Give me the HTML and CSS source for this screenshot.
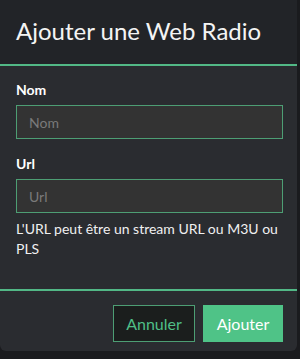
FILE: index.html
```html
<!DOCTYPE html>
<html>
	<head>
		<meta charset="utf-8" />
		<title>Ajouter une Web Radio</title>
		<link rel="stylesheet" href="styles.css">
	</head>
	<body>
		<div class="modal">
			<div class="modal-head">
				<h2>Ajouter une Web Radio</h2>
			</div>
			<div class="modal-body">
				<label class="lbl">Nom</label>
				<input class="field" type="text" placeholder="Nom">
				<label class="lbl lbl-url">Url</label>
				<input class="field" type="text" placeholder="Url">
				<p class="help">L'URL peut être un stream URL ou M3U ou PLS</p>
			</div>
			<div class="modal-foot">
				<button class="btn btn-cancel">Annuler</button>
				<button class="btn btn-ok">Ajouter</button>
			</div>
		</div>
	</body>
</html>
```

FILE: styles.css
```css
*{
	margin: 0;
	padding: 0;
	box-sizing: border-box;
}
body{
	background: #1a1b1e;
	font-family: Lato, "Open Sans", sans-serif;
	color: #fff;
}
.modal{
	width: 297px;
	height: 355px;
	margin-top: -4px;
	background: #2a2c30;
	border-radius: 0 0 6px 6px;
	overflow: hidden;
	display: flex;
	flex-direction: column;
}
.modal-head{
	height: 70px;
	padding: 21px 16px 0;
	background: #222428;
	border-bottom: 2px solid #52b886;
}
.modal-head h2{
	font-weight: 400;
	font-size: 24px;
	line-height: 28px;
	color: #f4f4f4;
}
.modal-body{
	padding: 15px 16px 0;
	height: 223px;
	display: flex;
	flex-direction: column;
}
.lbl{
	font-weight: 700;
	font-size: 14px;
	line-height: 17px;
	margin-bottom: 7px;
}
.lbl-url{
	margin-top: 16px;
}
.field{
	width: 267px;
	height: 34px;
	background: #333333;
	border: 1px solid #4d9e74;
	padding: 0 12px;
	font-family: inherit;
	font-size: 14px;
	color: #ddd;
	outline: none;
}
.field::placeholder{
	color: #7a7a7a;
}
.help{
	margin-top: 6px;
	font-size: 14px;
	line-height: 20px;
	color: #f0f0f0;
}
.modal-foot{
	border-top: 2px solid #52b886;
	padding: 14px 14px 0 0;
	display: flex;
	justify-content: flex-end;
	gap: 8px;
	flex: 1;
}
.btn{
	height: 37px;
	font-family: inherit;
	font-size: 16px;
	padding: 0 10px;
	border: 1px solid #4d9e74;
}
.btn-cancel{
	width: 82px;
	background: #1b1e1d;
	color: #4fbf87;
}
.btn-ok{
	width: 80px;
	background: #4fc387;
	border-color: #4fc387;
	color: #fff;
}
```
